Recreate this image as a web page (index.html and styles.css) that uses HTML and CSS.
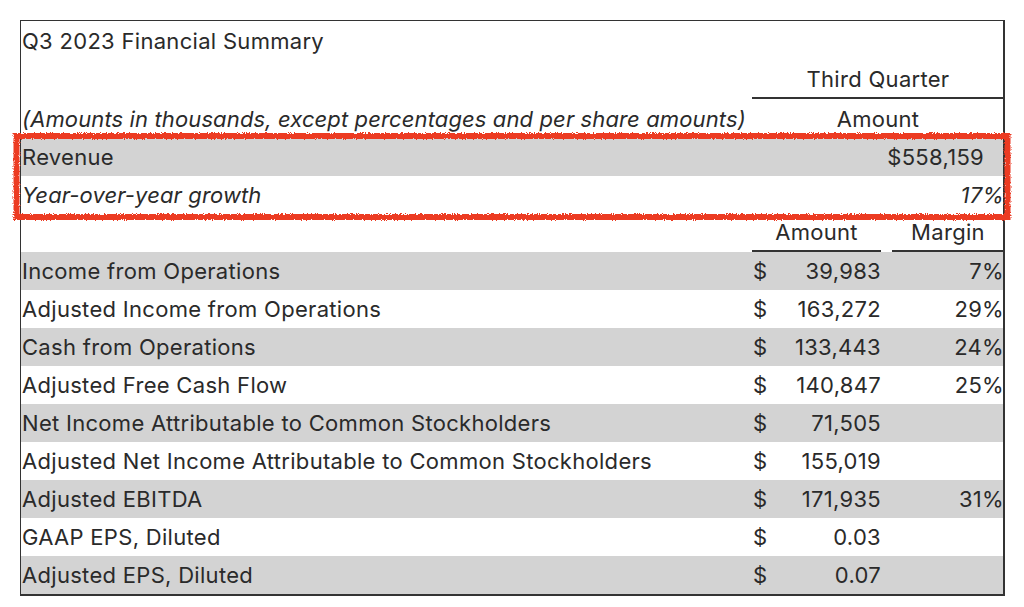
FILE: index.html
```html
<!DOCTYPE html>
<html lang="en">
<head>
<meta charset="utf-8">
<title>Q3 2023 Financial Summary</title>
<link rel="stylesheet" href="styles.css">
</head>
<body>
<div class="page">
  <div class="sheet">
    <div class="row title-row"><div class="label">Q3 2023 Financial Summary</div></div>
    <div class="row head-row">
      <div class="label"></div>
      <div class="span-head"><span>Third Quarter</span></div>
    </div>
    <div class="row head-row">
      <div class="label italic">(Amounts in thousands, except percentages and per share amounts)</div>
      <div class="span-sub">Amount</div>
    </div>
    <div class="row shaded">
      <div class="label">Revenue</div>
      <div class="span-val">$558,159</div>
    </div>
    <div class="row">
      <div class="label italic">Year-over-year growth</div>
      <div class="span-val italic growth">17%</div>
    </div>
    <div class="row col-head">
      <div class="label"></div>
      <div class="amt-head"><span>Amount</span></div>
      <div class="mgn-head"><span>Margin</span></div>
    </div>
    <div class="row shaded">
      <div class="label">Income from Operations</div>
      <div class="amt"><span class="cur">$</span><span>39,983</span></div>
      <div class="mgn">7%</div>
    </div>
    <div class="row">
      <div class="label">Adjusted Income from Operations</div>
      <div class="amt"><span class="cur">$</span><span>163,272</span></div>
      <div class="mgn">29%</div>
    </div>
    <div class="row shaded">
      <div class="label">Cash from Operations</div>
      <div class="amt"><span class="cur">$</span><span>133,443</span></div>
      <div class="mgn">24%</div>
    </div>
    <div class="row">
      <div class="label">Adjusted Free Cash Flow</div>
      <div class="amt"><span class="cur">$</span><span>140,847</span></div>
      <div class="mgn">25%</div>
    </div>
    <div class="row shaded">
      <div class="label">Net Income Attributable to Common Stockholders</div>
      <div class="amt"><span class="cur">$</span><span>71,505</span></div>
      <div class="mgn"></div>
    </div>
    <div class="row">
      <div class="label">Adjusted Net Income Attributable to Common Stockholders</div>
      <div class="amt"><span class="cur">$</span><span>155,019</span></div>
      <div class="mgn"></div>
    </div>
    <div class="row shaded">
      <div class="label">Adjusted EBITDA</div>
      <div class="amt"><span class="cur">$</span><span>171,935</span></div>
      <div class="mgn">31%</div>
    </div>
    <div class="row">
      <div class="label">GAAP EPS, Diluted</div>
      <div class="amt"><span class="cur">$</span><span>0.03</span></div>
      <div class="mgn"></div>
    </div>
    <div class="row shaded">
      <div class="label">Adjusted EPS, Diluted</div>
      <div class="amt"><span class="cur">$</span><span>0.07</span></div>
      <div class="mgn"></div>
    </div>
  </div>
  <svg class="highlight" width="1024" height="607" viewBox="0 0 1024 607" aria-hidden="true">
    <defs>
      <filter id="rough" x="-5%" y="-20%" width="110%" height="140%">
        <feTurbulence type="fractalNoise" baseFrequency="0.9" numOctaves="2" seed="3" result="n"/>
        <feDisplacementMap in="SourceGraphic" in2="n" scale="4" xChannelSelector="R" yChannelSelector="G"/>
      </filter>
    </defs>
    <rect x="16.5" y="136" width="991" height="81" fill="none" stroke="#ec3b22" stroke-width="6" filter="url(#rough)"/>
  </svg>
</div>
</body>
</html>
```

FILE: styles.css
```css
html, body {
  margin: 0;
  padding: 0;
  background: #ffffff;
}

.page {
  position: relative;
  width: 1024px;
  height: 607px;
  padding: 20px 0 0 20px;
  box-sizing: border-box;
  font-family: Inter, "Liberation Sans", Arial, sans-serif;
  font-size: 22px;
  letter-spacing: 0.3px;
  color: #2a2a2a;
}

.sheet {
  width: 985px;
  box-sizing: border-box;
  border-style: solid;
  border-color: #333333;
  border-width: 1px 2px 2px 1px;
}

.row {
  display: grid;
  grid-template-columns: 731px 130px 122px;
  height: 38px;
  align-items: center;
}

.title-row { height: 39px; }
.head-row { height: 39px; }

.shaded { background: #d3d3d3; }

.label {
  grid-column: 1;
  padding-left: 1px;
  white-space: nowrap;
}

.italic { font-style: italic; letter-spacing: 0.12px; }

.span-head,
.span-sub,
.span-val {
  grid-column: 2 / 4;
  height: 100%;
  display: flex;
  align-items: center;
}

.span-head {
  justify-content: center;
  border-bottom: 2px solid #333333;
  box-sizing: border-box;
}

.span-sub { justify-content: center; }

.span-val {
  justify-content: flex-end;
  padding-right: 20px;
}

.span-val.growth { padding-right: 0; }

.col-head { align-items: stretch; }

.amt-head,
.mgn-head {
  display: flex;
  align-items: center;
  justify-content: center;
}

.amt-head span,
.mgn-head span {
  flex: 1;
  text-align: center;
  height: 100%;
  display: flex;
  align-items: center;
  justify-content: center;
  border-bottom: 2px solid #333333;
  box-sizing: border-box;
}

.amt-head { grid-column: 2; padding-right: 1px; }
.mgn-head { grid-column: 3; padding-left: 10px; }

.amt {
  grid-column: 2;
  display: flex;
  justify-content: space-between;
  padding: 0 1px 0 0;
}

.cur { padding-left: 1px; }

.mgn {
  grid-column: 3;
  text-align: right;
}

.highlight {
  position: absolute;
  left: 0;
  top: 0;
  pointer-events: none;
}
```
